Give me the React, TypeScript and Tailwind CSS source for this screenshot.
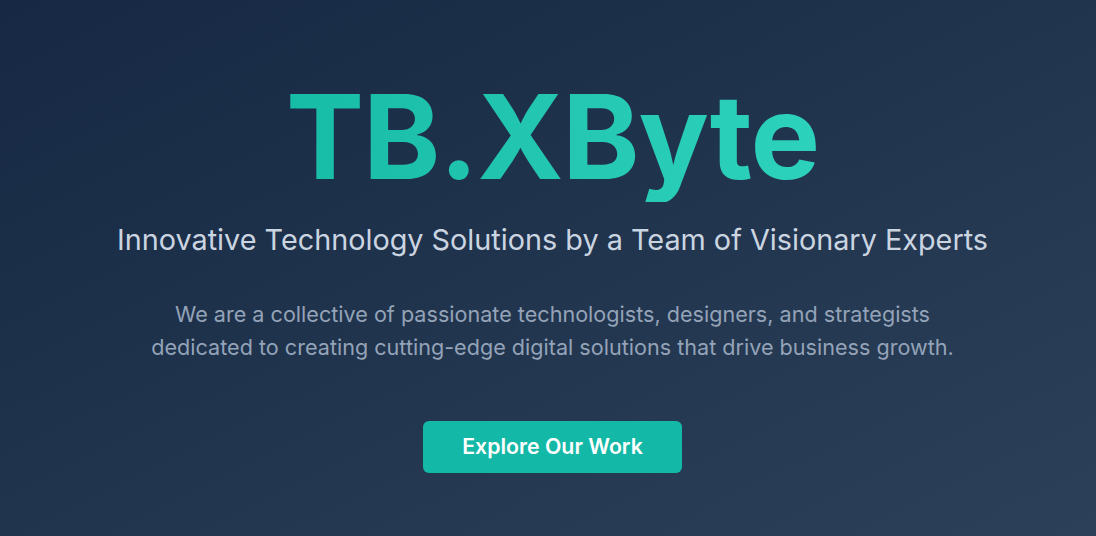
export default function App() {
  return (
    <div className="min-h-screen w-full bg-gradient-to-br from-[#162843] to-[#2c4159] flex items-center justify-center pl-[9px] font-['Inter',sans-serif]">
      <section className="flex flex-col items-center text-center px-6 pt-[10px]">
        {/* Brand title */}
        <h1 className="text-[117px] leading-[1.1] font-bold tracking-[-0.01em] bg-gradient-to-r from-[#17bca6] to-[#2dd2bd] bg-clip-text text-transparent">
          TB.XByte
        </h1>
        <p className="mt-[19px] text-[28.8px] leading-[1.3] text-[#cbd5e1]">
          Innovative Technology Solutions by a Team of Visionary Experts
        </p>
        <p className="mt-[40px] max-w-[830px] text-[21.6px] leading-[33px] text-[#94a3b8]">
          We are a collective of passionate technologists, designers, and strategists
          dedicated to creating cutting-edge digital solutions that drive business growth.
        </p>
        <button className="mt-[57px] w-[259px] h-[52px] rounded-md bg-[#14b8a6] text-white text-[21.3px] font-semibold">
          Explore Our Work
        </button>
      </section>
    </div>
  );
}
